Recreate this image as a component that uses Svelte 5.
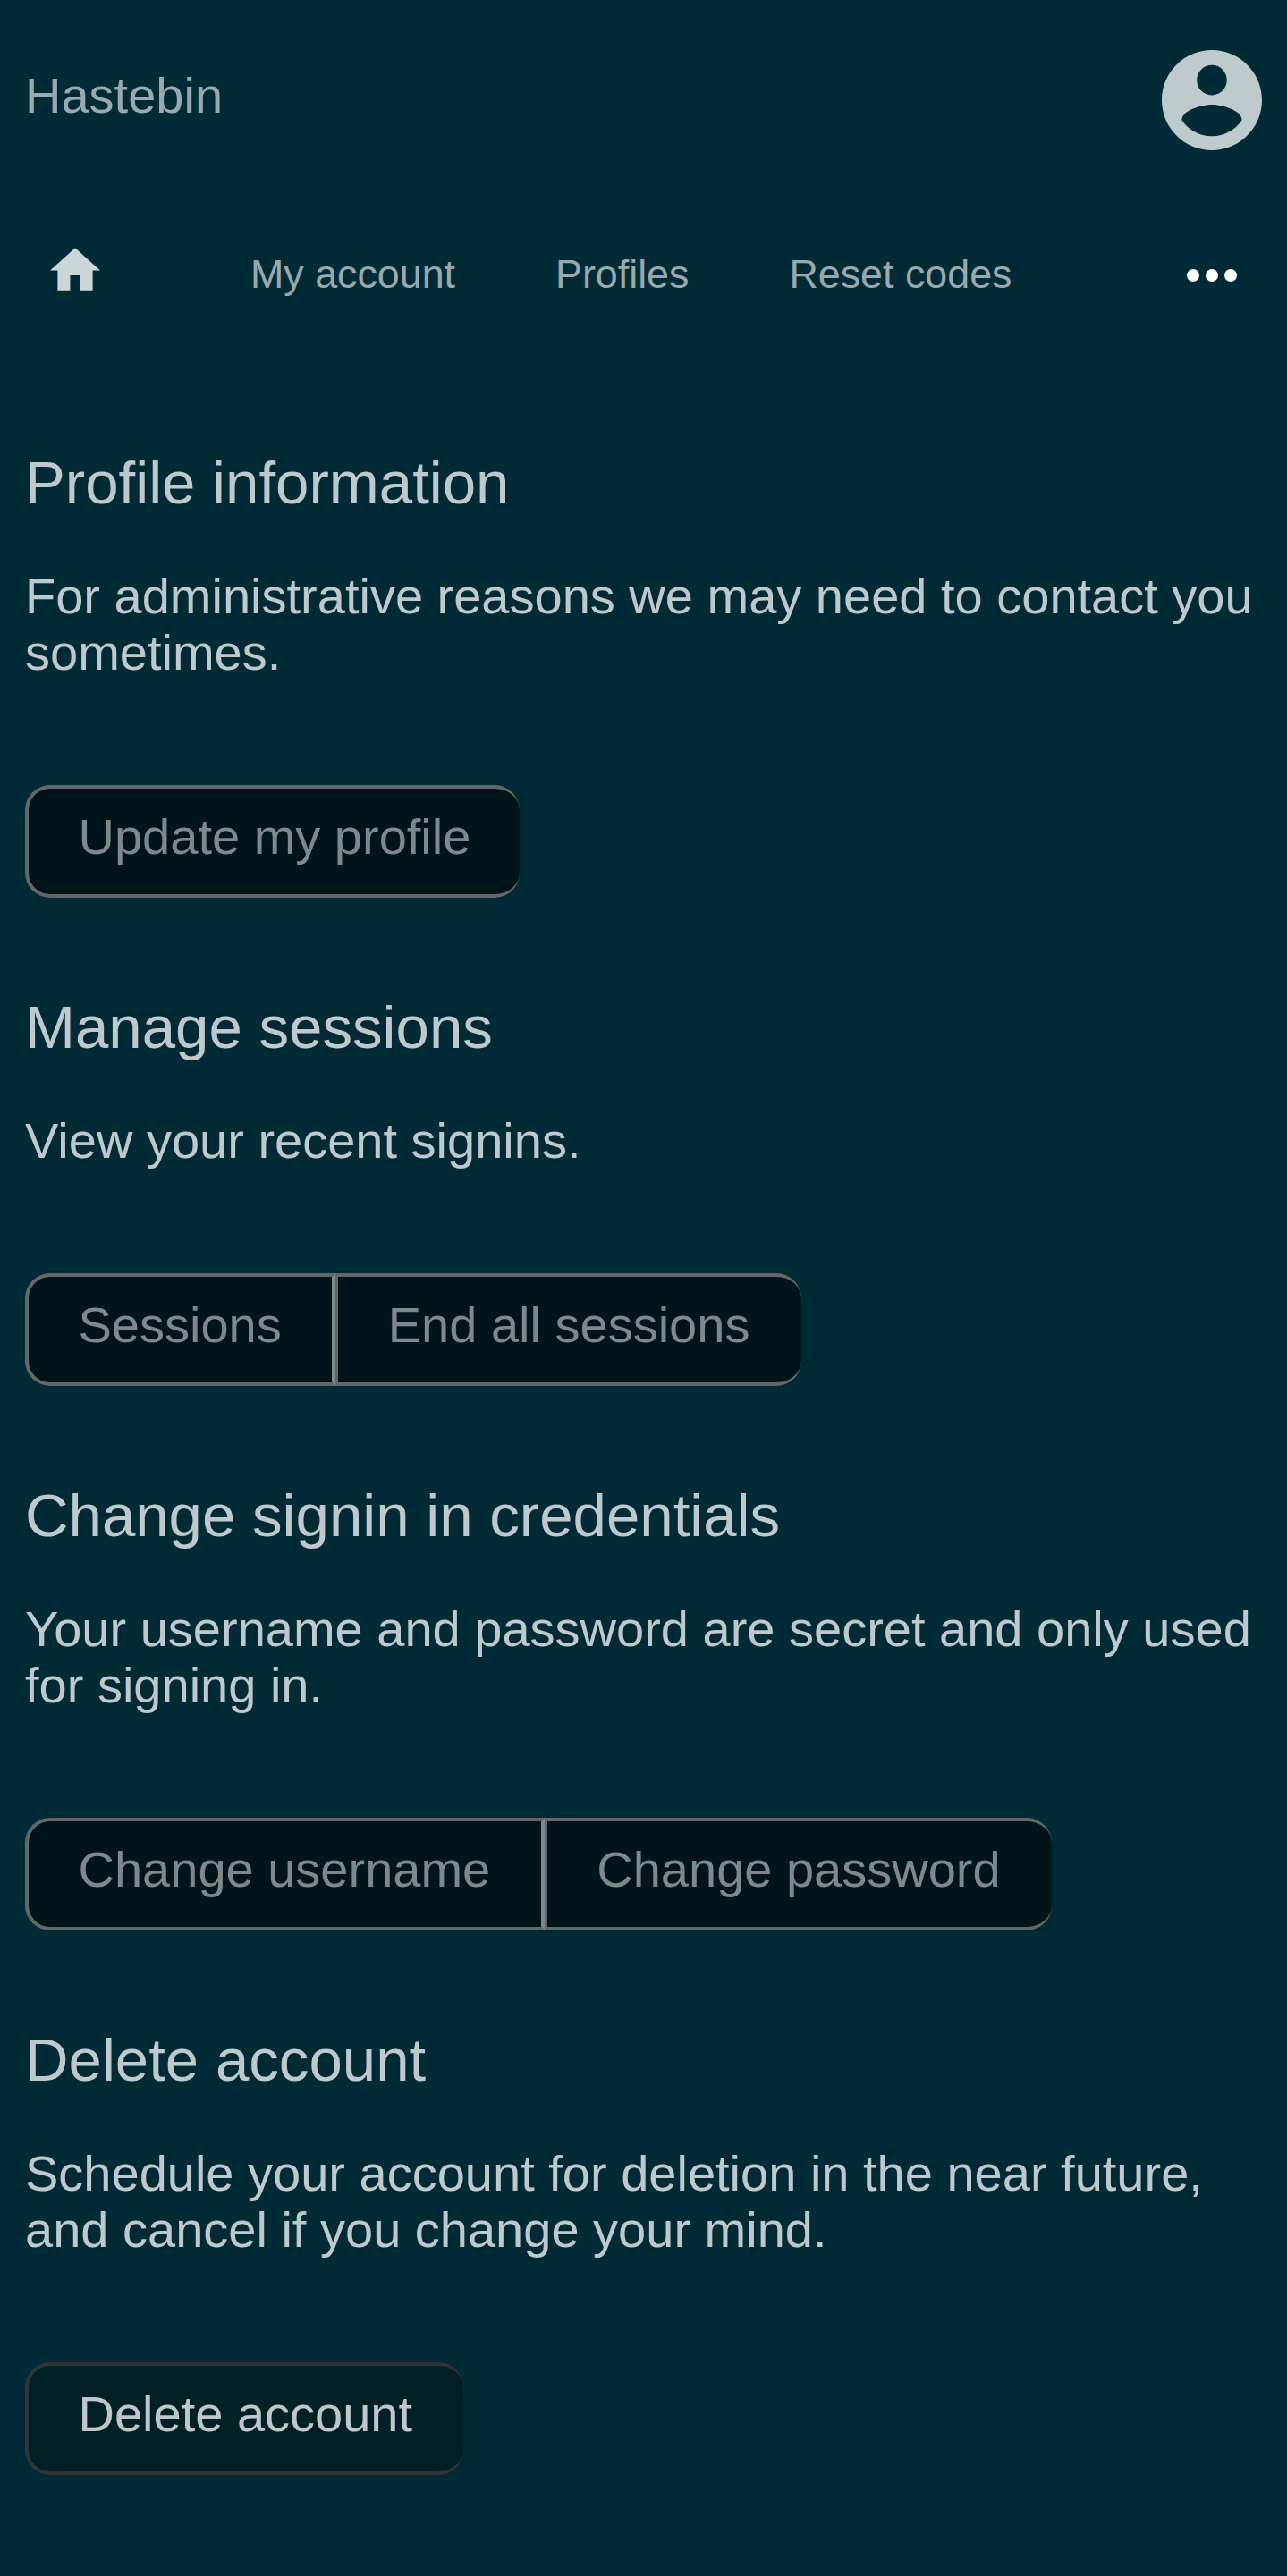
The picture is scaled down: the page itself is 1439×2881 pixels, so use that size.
<script>
  const links = ['My account', 'Profiles', 'Reset codes'];
  const sections = [
    { title: 'Profile information', text: 'For administrative reasons we may need to contact you sometimes.', buttons: ['Update my profile'] },
    { title: 'Manage sessions', text: 'View your recent signins.', buttons: ['Sessions', 'End all sessions'] },
    { title: 'Change signin in credentials', text: 'Your username and password are secret and only used for signing in.', buttons: ['Change username', 'Change password'] },
    { title: 'Delete account', text: 'Schedule your account for deletion in the near future, and cancel if you change your mind.', buttons: ['Delete account'], active: true },
  ];
</script>

<div class="page">
  <header>
    <a class="brand" href="#home">Hastebin</a>
    <svg class="avatar" viewBox="2 2 20 20" aria-label="Account">
      <path fill-rule="evenodd" d="M12 2C6.48 2 2 6.48 2 12s4.48 10 10 10 10-4.48 10-10S17.52 2 12 2zm0 3c1.66 0 3 1.34 3 3s-1.34 3-3 3-3-1.34-3-3 1.34-3 3-3zm0 14.2c-2.5 0-4.71-1.28-6-3.22.03-1.99 4-3.08 6-3.08 1.99 0 5.97 1.09 6 3.08-1.29 1.94-3.5 3.22-6 3.22z" />
    </svg>
  </header>
  <nav>
    <svg class="home" viewBox="2 3 20 17" aria-label="Home">
      <path d="M10 20v-6h4v6h5v-8h3L12 3 2 12h3v8z" />
    </svg>
    <div class="links">
      {#each links as link}<a href="#nav">{link}</a>{/each}
    </div>
    <svg class="more" viewBox="4 10 16 4" aria-label="More">
      <circle cx="6" cy="12" r="2" /><circle cx="12" cy="12" r="2" /><circle cx="18" cy="12" r="2" />
    </svg>
  </nav>
  <main>
    {#each sections as s}
      <section>
        <h2>{s.title}</h2>
        <p>{s.text}</p>
        <div class="group">
          {#each s.buttons as b}<button class:active={s.active}>{b}</button>{/each}
        </div>
      </section>
    {/each}
  </main>
</div>

<style>
  :global(body) { background: #002b36; }
  .page {
    box-sizing: border-box;
    width: 1438.5px;
    height: 2881px;
    overflow: hidden;
    padding: 0 28px;
    font: 56px/63px "Liberation Sans", Arial, sans-serif;
    color: #bfc9cc;
  }
  a { color: #99a9ad; text-decoration: none; }
  header { display: flex; justify-content: space-between; height: 168px; padding-top: 56px; box-sizing: border-box; }
  .brand { padding-top: 19px; }
  .avatar { width: 112px; height: 112px; fill: #bfcacd; }
  nav { display: flex; height: 280px; box-sizing: border-box; padding: 109px 28px 0; font-size: 44.8px; line-height: 52px; }
  .home { width: 56px; height: 48px; fill: #ccd5d7; }
  .links { display: flex; gap: 112px; margin-left: 168px; padding-top: 3px; }
  .more { width: 56px; height: 14px; margin: 24px 0 0 auto; fill: #fff; }
  main { padding-top: 53px; }
  section { margin-bottom: 106px; }
  h2 { margin: 0; font-size: 67.2px; font-weight: 400; line-height: 77px; }
  p { margin: 57px 0 117px; }
  .group { display: flex; }
  button {
    height: 126px;
    box-sizing: border-box;
    margin: 0;
    padding: 0 56.5px 11px 55.5px;
    border: 4px solid #666;
    border-right-width: 0;
    background: #001419;
    color: #7f898b;
    font: inherit;
  }
  button:not(:last-child) { border-right: 4px solid #7f898b; }
  button:not(:first-child) { border-left-width: 3px; padding-right: 57.5px; }
  button:only-child:not(.active) { padding-right: 54.5px; }
  button:first-child { border-top-left-radius: 28px; border-bottom-left-radius: 28px; }
  button:last-child { border-top-right-radius: 28px; border-bottom-right-radius: 28px; }
  .active { border-color: #333; background: #002026; color: #bfc7c9; }
</style>
